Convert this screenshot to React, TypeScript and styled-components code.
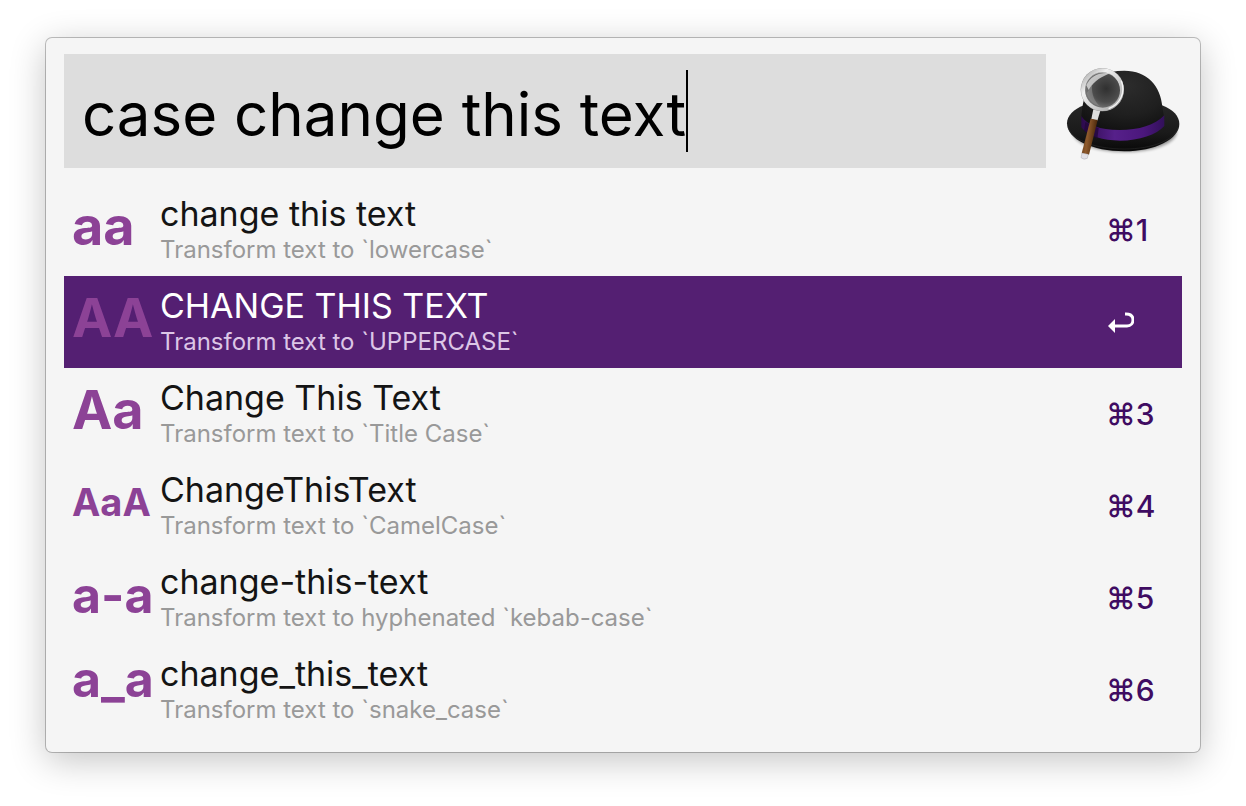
import React, { useState } from "react";
import styled, { createGlobalStyle } from "styled-components";

const GlobalStyle = createGlobalStyle`
  * { box-sizing: border-box; }
  body {
    margin: 0;
    background: #ffffff;
    font-family: Inter, "Noto Sans", sans-serif;
  }
`;

const Desktop = styled.main`
  padding: 38px 46px 54px;
`;

const Panel = styled.section`
  padding: 16px 18px;
  border-radius: 6px;
  background: #f5f5f5;
  box-shadow:
    0 0 0 1px rgba(0, 0, 0, 0.24),
    0 8px 36px rgba(0, 0, 0, 0.24);
`;

const Header = styled.header`
  display: flex;
  align-items: center;
  gap: 20px;
`;

const SearchField = styled.label`
  display: flex;
  flex: 1;
  align-items: center;
  min-width: 0;
  height: 114px;
  padding-left: 18px;
  background: #dddddd;
`;

const SearchInput = styled.input`
  field-sizing: content;
  max-width: 100%;
  height: 88px;
  padding: 6px 0 0;
  border: 0;
  outline: none;
  background: transparent;
  color: #000000;
  caret-color: transparent;
  font-family: inherit;
  font-size: 60px;
  font-weight: 400;
  line-height: 82px;
`;

const Caret = styled.span`
  width: 2px;
  height: 82px;
  background: #000000;
`;

const HatLogo = styled.svg`
  flex: none;
  width: 116px;
  height: 96px;
  overflow: visible;
`;

const Results = styled.ul`
  margin: 16px 0 0;
  padding: 0;
  list-style: none;
`;

const ResultButton = styled.button<{ $selected: boolean }>`
  display: flex;
  width: 100%;
  height: 92px;
  padding: 0 0 0 8px;
  border: 0;
  text-align: left;
  font-family: inherit;
  color: ${(p) => (p.$selected ? "#ffffff" : "#141414")};
  background: ${(p) => (p.$selected ? "#541f72" : "transparent")};
`;

const Glyph = styled.span<{ $size: number; $line: number }>`
  flex: none;
  width: 88px;
  white-space: nowrap;
  color: #8c4296;
  font-size: ${(p) => p.$size}px;
  font-weight: 700;
  line-height: ${(p) => p.$line}px;
`;

const Texts = styled.span`
  display: flex;
  flex: 1;
  flex-direction: column;
  min-width: 0;
  padding-top: 8px;
`;

const Title = styled.span`
  font-size: 34px;
  line-height: 44px;
`;

const Subtitle = styled.span<{ $selected: boolean }>`
  font-size: 24px;
  line-height: 28px;
  color: ${(p) => (p.$selected ? "#dcc6e6" : "#999999")};
`;

const Shortcut = styled.kbd`
  display: flex;
  flex: none;
  align-items: center;
  width: 76px;
  height: 92px;
  color: #3f0c62;
  font-family: inherit;
  font-size: 30px;
  font-weight: 500;
`;

const ReturnIcon = styled.svg`
  width: 28px;
  height: 24px;
`;

interface Result {
  glyph: string;
  size: number;
  line: number;
  title: string;
  subtitle: string;
}

const results: Result[] = [
  { glyph: "aa", size: 54, line: 84, title: "change this text", subtitle: "Transform text to `lowercase`" },
  { glyph: "AA", size: 54, line: 84, title: "CHANGE THIS TEXT", subtitle: "Transform text to `UPPERCASE`" },
  { glyph: "Aa", size: 54, line: 84, title: "Change This Text", subtitle: "Transform text to `Title Case`" },
  { glyph: "AaA", size: 38, line: 84, title: "ChangeThisText", subtitle: "Transform text to `CamelCase`" },
  { glyph: "a-a", size: 50, line: 86, title: "change-this-text", subtitle: "Transform text to hyphenated `kebab-case`" },
  { glyph: "a_a", size: 50, line: 70, title: "change_this_text", subtitle: "Transform text to `snake_case`" },
];

function Hat() {
  return (
    <HatLogo viewBox="60 39 348 288" role="img" aria-label="Bowler hat with magnifying glass">
      <defs>
        <radialGradient id="crown" cx="0.55" cy="0.25" r="0.8">
          <stop offset="0" stopColor="#2c2c2c" />
          <stop offset="0.6" stopColor="#1f1f1f" />
          <stop offset="1" stopColor="#101010" />
        </radialGradient>
        <linearGradient id="brim" x1="0" y1="0" x2="0" y2="1">
          <stop offset="0" stopColor="#262626" />
          <stop offset="0.6" stopColor="#1a1a1a" />
          <stop offset="1" stopColor="#080808" />
        </linearGradient>
        <linearGradient id="band" x1="0" y1="0" x2="1" y2="0">
          <stop offset="0" stopColor="#2c0a4c" />
          <stop offset="0.4" stopColor="#56208a" />
          <stop offset="0.75" stopColor="#4b177c" />
          <stop offset="1" stopColor="#32105a" />
        </linearGradient>
        <linearGradient id="rim" x1="0" y1="0" x2="1" y2="1">
          <stop offset="0" stopColor="#a0a0a0" />
          <stop offset="0.3" stopColor="#f2f2f2" />
          <stop offset="0.6" stopColor="#d0d0d0" />
          <stop offset="1" stopColor="#a0a0a0" />
        </linearGradient>
        <radialGradient id="lens" cx="0.6" cy="0.45" r="0.6">
          <stop offset="0" stopColor="#303030" />
          <stop offset="0.65" stopColor="#4c4c4c" />
          <stop offset="1" stopColor="#777777" />
        </radialGradient>
        <linearGradient id="wood" x1="0" y1="0" x2="1" y2="0.25">
          <stop offset="0" stopColor="#5a3414" />
          <stop offset="0.45" stopColor="#8f5a2c" />
          <stop offset="1" stopColor="#452408" />
        </linearGradient>
        <filter id="soft" x="-10%" y="-20%" width="120%" height="150%">
          <feGaussianBlur stdDeviation="4" />
        </filter>
      </defs>
      <ellipse cx="236" cy="246" rx="156" ry="60" fill="#000000" opacity="0.4" filter="url(#soft)" />
      <path d="M63 220C63 198 82 178 114 166L348 166C382 179 400 199 400 222C400 267 328 304 235 304C138 304 63 268 63 220Z" fill="url(#brim)" />
      <path d="M66 232C78 272 150 297 235 297C320 297 386 270 397 232" fill="none" stroke="#333333" strokeWidth="2" opacity="0.7" />
      <path d="M106 204C110 150 120 62 235 62C304 62 344 108 349 170L355 206C325 238 270 246 215 243C168 240 130 230 106 204Z" fill="url(#crown)" />
      <path d="M106 198C124 226 160 239 220 240C280 240 326 226 355 196L355 228C332 254 280 272 222 272C170 271 128 260 106 232Z" fill="url(#band)" />
      <path d="M118 216L158 235L154 267L114 242Z" fill="#200636" opacity="0.7" />
      <path d="M142 178L163 182L154 212L136 207Z" fill="#dddddd" />
      <path d="M134 206L155 210L129 314L107 310Z" fill="url(#wood)" />
      <path d="M108 309L127 313L124 325Q114 331 105 323Z" fill="#e2e0e6" stroke="#8c8c94" strokeWidth="1" />
      <circle cx="169" cy="119" r="65" fill="#999999" />
      <circle cx="169" cy="119" r="58" fill="none" stroke="url(#rim)" strokeWidth="12" />
      <circle cx="170" cy="121" r="52" fill="url(#lens)" />
      <path d="M121 106C132 78 162 64 194 70C170 78 144 92 128 120Z" fill="#dedede" opacity="0.8" />
      <path d="M122 130C128 150 142 165 162 169C146 154 136 134 138 104Z" fill="#929292" opacity="0.55" />
      <path d="M226 92C240 128 222 162 188 176" fill="none" stroke="#f6f6f6" strokeWidth="4" />
    </HatLogo>
  );
}

export default function App() {
  const [query, setQuery] = useState("case change this text");
  const [selected, setSelected] = useState(1);

  return (
    <>
      <GlobalStyle />
      <Desktop>
        <Panel>
          <Header>
            <SearchField>
              <SearchInput
                aria-label="Search"
                spellCheck={false}
                value={query}
                onChange={(e) => setQuery(e.target.value)}
              />
              <Caret />
            </SearchField>
            <Hat />
          </Header>
          <Results>
            {results.map((r, i) => (
              <li key={r.glyph}>
                <ResultButton type="button" $selected={i === selected} onClick={() => setSelected(i)}>
                  <Glyph $size={r.size} $line={r.line}>{r.glyph}</Glyph>
                  <Texts>
                    <Title>{r.title}</Title>
                    <Subtitle $selected={i === selected}>{r.subtitle}</Subtitle>
                  </Texts>
                  <Shortcut>
                    {i === selected ? (
                      <ReturnIcon viewBox="0 0 28 24" role="img" aria-label="Return">
                        <path d="M2 16L9 9V23Z" fill="#ffffff" />
                        <path
                          d="M7 16H21C25 16 27 13 27 10C27 6 25 4 20 4H19"
                          fill="none"
                          stroke="#ffffff"
                          strokeWidth="3"
                        />
                      </ReturnIcon>
                    ) : (
                      `⌘${i + 1}`
                    )}
                  </Shortcut>
                </ResultButton>
              </li>
            ))}
          </Results>
        </Panel>
      </Desktop>
    </>
  );
}
